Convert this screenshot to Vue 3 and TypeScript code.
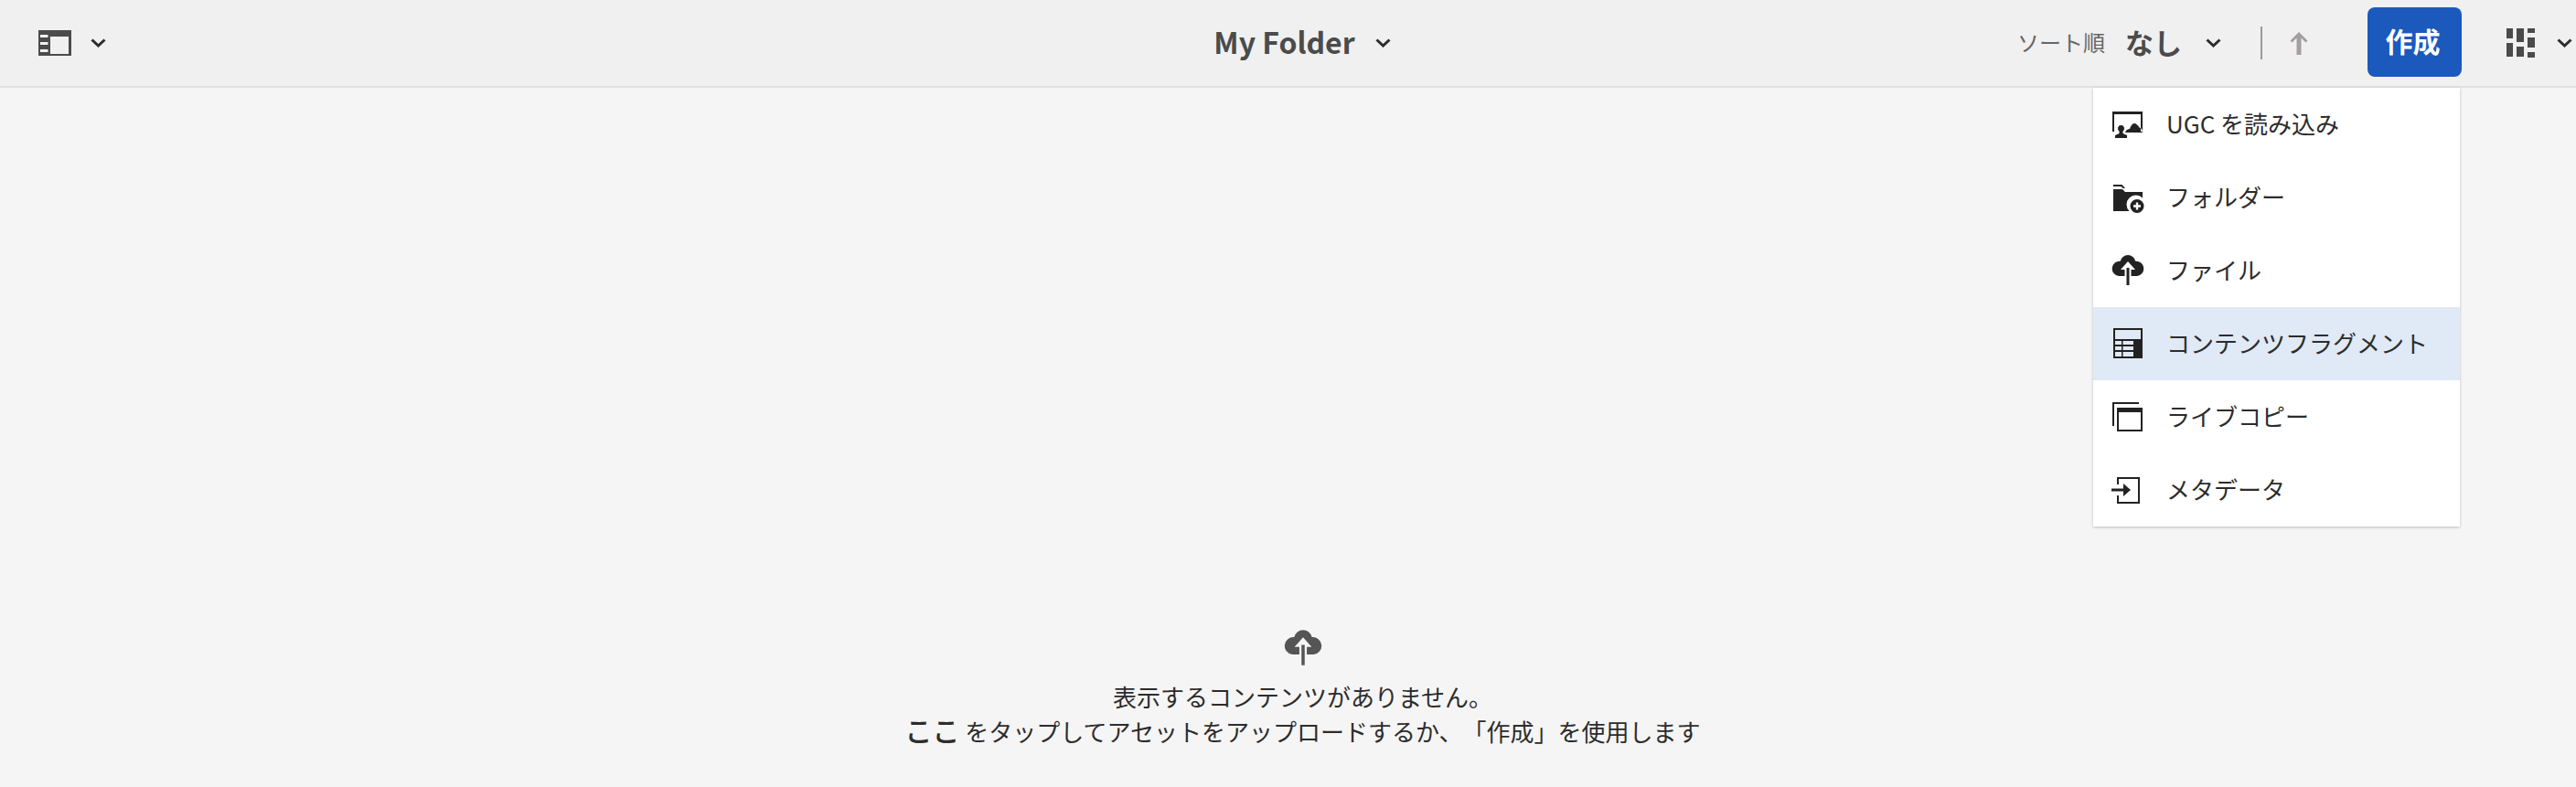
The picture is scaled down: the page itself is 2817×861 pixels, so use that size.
<template>
  <div class="page">
    <header class="top-bar">
      <div class="left-tools">
        <svg class="rail-icon" viewBox="0 0 36 28"><path fill-rule="evenodd" :d="railPath" /></svg>
        <svg class="chevron" viewBox="0 0 17 10"><path d="M1.5 1.5 8.5 8l7-6.5" /></svg>
      </div>

      <div class="title">
        <span>My Folder</span>
        <svg class="chevron" viewBox="0 0 17 10"><path d="M1.5 1.5 8.5 8l7-6.5" /></svg>
      </div>

      <div class="right-tools">
        <span class="sort-label">ソート順</span>
        <span class="sort-value">なし</span>
        <svg class="chevron" viewBox="0 0 17 10"><path d="M1.5 1.5 8.5 8l7-6.5" /></svg>
        <i class="divider"></i>
        <svg class="sort-arrow" viewBox="0 0 20 26"><path d="M7.500 26V7.500l-5 5L.5 10.500 10 1l9.500 9.500-2 2-5-5V26z" /></svg>
        <button class="create-btn">作成</button>
        <svg class="view-icon" viewBox="0 0 32 32"><path :d="viewPath" /></svg>
        <svg class="chevron" viewBox="0 0 17 10"><path d="M1.5 1.5 8.5 8l7-6.5" /></svg>
      </div>
    </header>

    <ul class="create-menu">
      <li v-for="item in menuItems" :key="item.label" :class="{ active: item.active }">
        <svg viewBox="0 0 36 36"><path fill-rule="evenodd" :d="item.icon" /></svg>
        <span>{{ item.label }}</span>
      </li>
    </ul>

    <main class="empty-state">
      <svg class="empty-icon" viewBox="0 0 36 36"><path fill-rule="evenodd" :d="cloudPath" /></svg>
      <p>表示するコンテンツがありません。</p>
      <p><strong>ここ</strong> をタップしてアセットをアップロードするか、「作成」を使用します</p>
    </main>
  </div>
</template>

<script setup lang="ts">
interface MenuItem {
  label: string
  icon: string
  active?: boolean
}

const railPath =
  'M0 0h36v28H0zM13 7v19h20V7zM2 5v3h8.500V5zM2 13v3h8.500v-3zM2 21v3h8.500v-3z'

const viewPath =
  'M0 0h7v11H0zM0 16h7v15H0zM11 0h8v15h-8zM11 20h8v11h-8zM23 0h8v5h-8zM23 10h8v11h-8zM23 26h8v6h-8z'

const cloudPath =
  'M18 1a8.500 8.500 0 0 1 8.300 6.800 8 8 0 0 1 1.700 16.200H21.500v-7H26L18 8l-8 9h4.500v7H8A8 8 0 0 1 9.700 7.800 8.500 8.500 0 0 1 18 1zM16.500 15h3v19h-3z'

const menuItems: MenuItem[] = [
  {
    label: 'UGC を読み込み',
    icon: 'M1 4h33v22h-2V7H3v19H1zM15 27c1-3 3-4 5-4 1-3 3-6 5-6s4 2 6 5c2 0 3 2 3 5zM10.500 19a3.500 3.500 0 0 1 2 6.400V28l4.500 2v3H4v-3l4.500-2v-2.600a3.500 3.500 0 0 1 2-6.400z',
  },
  {
    label: 'フォルダー',
    icon: 'M2 4h9.500L15 8h-2.500l-1.800-2H2zM2 9h10l3 3h19v6.500A10 10 0 0 0 19.500 33H2zM28 20a7.500 7.500 0 1 1 0 15 7.500 7.500 0 0 1 0-15zM26.800 23.500v2.800H24v2.400h2.800v2.800h2.400v-2.800H32v-2.400h-2.800v-2.800z',
  },
  { label: 'ファイル', icon: cloudPath },
  {
    label: 'コンテンツフラグメント',
    active: true,
    icon: 'M2 1h32v33H2zM4 3v10h28V3zM4 15v4h7v-4zM12.500 15v4H24v-4zM4 21v4h7v-4zM12.500 21v4H24v-4zM4 27v5h7v-5zM12.500 27v5H24v-5z',
  },
  {
    label: 'ライブコピー',
    icon: 'M1 2h29v2H3v24H1zM6 8h28v26H6zM8 13v19h24V13z',
  },
  {
    label: 'メタデータ',
    icon: 'M6 4h25v29H6v-9h2v7h21V6H8v6H6zM0 16.500h13V11l8 7-8 7v-5.500H0z',
  },
]
</script>

<style>
body {
  margin: 0;
  background: #f5f5f5;
}
</style>

<style scoped>
.page {
  position: relative;
  height: 861px;
  overflow: hidden;
  background: #f5f5f5;
  color: #2c2c2c;
  font-family: "Noto Sans CJK JP", "Noto Sans", sans-serif;
  text-spacing-trim: space-all;
}

.top-bar {
  display: grid;
  grid-template-columns: 1fr auto 1fr;
  align-items: center;
  box-sizing: border-box;
  height: 96px;
  padding: 0 4px 0 42px;
  background: #f0f0f0;
  border-bottom: 2px solid #e0e0e0;
}

.left-tools,
.title,
.right-tools {
  display: flex;
  align-items: center;
}

.rail-icon {
  width: 36px;
  height: 28px;
  fill: #4b4b4b;
}

.chevron {
  width: 17px;
  height: 10px;
  fill: none;
  stroke: #2c2c2c;
  stroke-width: 3;
}

.left-tools .chevron {
  margin-left: 21px;
}

.title {
  margin-right: 7px;
  font-size: 32px;
  font-weight: 600;
  color: #4b4b4b;
}

.title span,
.sort-label,
.sort-value {
  margin-bottom: 4px;
}

.title .chevron {
  margin-left: 22px;
}

.right-tools {
  justify-content: flex-end;
}

.sort-label {
  font-size: 24px;
  color: #666;
}

.sort-value {
  margin-left: 22px;
  font-size: 31px;
  font-weight: 600;
  color: #4b4b4b;
}

.sort-value + .chevron {
  margin-left: 26px;
}

.divider {
  width: 2px;
  height: 36px;
  margin-left: 43px;
  background: #9a9a9a;
}

.sort-arrow {
  width: 20px;
  height: 26px;
  margin-left: 30px;
  fill: #a39f9f;
}

.create-btn {
  width: 103px;
  height: 76px;
  margin: 0 0 2px 65px;
  padding: 0 4px 4px 0;
  border: 0;
  border-radius: 8px;
  background: #1b59bd;
  color: #fff;
  font-family: inherit;
  font-size: 30px;
  font-weight: 700;
}

.view-icon {
  width: 32px;
  height: 32px;
  margin-left: 49px;
  fill: #4b4b4b;
}

.view-icon + .chevron {
  margin-left: 23px;
}

.create-menu {
  position: absolute;
  top: 96px;
  left: 2289px;
  width: 401px;
  margin: 0;
  padding: 0;
  list-style: none;
  background: #fff;
  box-shadow: 0 1px 3px rgba(0, 0, 0, 0.22);
}

.create-menu li {
  display: flex;
  align-items: center;
  gap: 24px;
  height: 80px;
  padding-left: 20px;
  font-size: 26px;
  color: #2c2c2c;
}

.create-menu li span {
  margin-bottom: 3px;
}

.create-menu li.active {
  background: #e0e9f6;
}

.create-menu svg {
  width: 36px;
  height: 36px;
  flex: none;
  fill: #222;
}

.empty-state {
  padding: 592px 0 0 32px;
  text-align: center;
  font-size: 26px;
  line-height: 36px;
}

.empty-icon {
  display: block;
  width: 42px;
  height: 42px;
  margin: 0 auto 14px;
  fill: #555;
}

.empty-state p {
  margin: 0;
}

.empty-state strong {
  font-size: 30px;
  font-weight: 500;
}
</style>
